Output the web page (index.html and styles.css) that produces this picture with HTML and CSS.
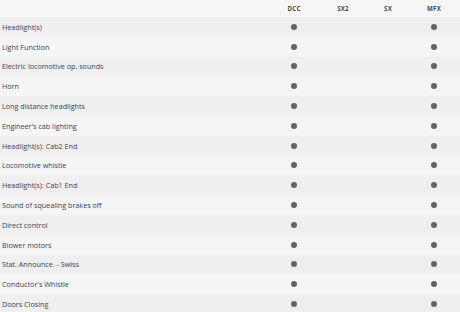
FILE: index.html
```html
<!DOCTYPE html>
<html>
<head>
<meta charset="utf-8">
<link rel="stylesheet" href="styles.css">
</head>
<body>
<div class="table">
  <div class="row head">
    <div class="label"></div>
    <div class="cell">DCC</div>
    <div class="cell">SX2</div>
    <div class="cell">SX</div>
    <div class="cell">MFX</div>
  </div>
  <div class="row"><div class="label">Headlight(s)</div><div class="cell"><span class="dot"></span></div><div class="cell"></div><div class="cell"></div><div class="cell"><span class="dot"></span></div></div>
  <div class="row"><div class="label">Light Function</div><div class="cell"><span class="dot"></span></div><div class="cell"></div><div class="cell"></div><div class="cell"><span class="dot"></span></div></div>
  <div class="row"><div class="label">Electric locomotive op. sounds</div><div class="cell"><span class="dot"></span></div><div class="cell"></div><div class="cell"></div><div class="cell"><span class="dot"></span></div></div>
  <div class="row"><div class="label">Horn</div><div class="cell"><span class="dot"></span></div><div class="cell"></div><div class="cell"></div><div class="cell"><span class="dot"></span></div></div>
  <div class="row"><div class="label">Long distance headlights</div><div class="cell"><span class="dot"></span></div><div class="cell"></div><div class="cell"></div><div class="cell"><span class="dot"></span></div></div>
  <div class="row"><div class="label">Engineer's cab lighting</div><div class="cell"><span class="dot"></span></div><div class="cell"></div><div class="cell"></div><div class="cell"><span class="dot"></span></div></div>
  <div class="row"><div class="label">Headlight(s): Cab2 End</div><div class="cell"><span class="dot"></span></div><div class="cell"></div><div class="cell"></div><div class="cell"><span class="dot"></span></div></div>
  <div class="row"><div class="label">Locomotive whistle</div><div class="cell"><span class="dot"></span></div><div class="cell"></div><div class="cell"></div><div class="cell"><span class="dot"></span></div></div>
  <div class="row"><div class="label">Headlight(s): Cab1 End</div><div class="cell"><span class="dot"></span></div><div class="cell"></div><div class="cell"></div><div class="cell"><span class="dot"></span></div></div>
  <div class="row"><div class="label">Sound of squealing brakes off</div><div class="cell"><span class="dot"></span></div><div class="cell"></div><div class="cell"></div><div class="cell"><span class="dot"></span></div></div>
  <div class="row"><div class="label">Direct control</div><div class="cell"><span class="dot"></span></div><div class="cell"></div><div class="cell"></div><div class="cell"><span class="dot"></span></div></div>
  <div class="row"><div class="label">Blower motors</div><div class="cell"><span class="dot"></span></div><div class="cell"></div><div class="cell"></div><div class="cell"><span class="dot"></span></div></div>
  <div class="row"><div class="label">Stat. Announce. - Swiss</div><div class="cell"><span class="dot"></span></div><div class="cell"></div><div class="cell"></div><div class="cell"><span class="dot"></span></div></div>
  <div class="row"><div class="label">Conductor's Whistle</div><div class="cell"><span class="dot"></span></div><div class="cell"></div><div class="cell"></div><div class="cell"><span class="dot"></span></div></div>
  <div class="row"><div class="label">Doors Closing</div><div class="cell"><span class="dot"></span></div><div class="cell"></div><div class="cell"></div><div class="cell"><span class="dot"></span></div></div>
</div>
</body>
</html>
```
FILE: styles.css
```css
html, body {
  margin: 0;
  padding: 0;
  background: #f6f6f6;
}
body {
  font-family: "Open Sans", "Liberation Sans", sans-serif;
  color: #3a4455;
  overflow: hidden;
}
.table {
  display: flex;
  flex-direction: column;
}
.row {
  display: grid;
  grid-template-columns: 270px 48px 50px 40px 52px;
  height: 19.8px;
  align-items: center;
  font-size: 7.2px;
  background: #f5f5f5;
}
.row:nth-child(even) {
  background: #efefef;
}
.row.head {
  height: 17px;
  background: #f6f6f6;
  font-size: 6.2px;
  font-weight: 700;
  color: #4a4a4a;
  letter-spacing: 0.2px;
}
.label {
  padding-left: 2px;
  white-space: nowrap;
}
.cell {
  display: flex;
  justify-content: center;
  align-items: center;
}
.dot {
  width: 6px;
  height: 6px;
  border-radius: 50%;
  background: #636363;
}
```
